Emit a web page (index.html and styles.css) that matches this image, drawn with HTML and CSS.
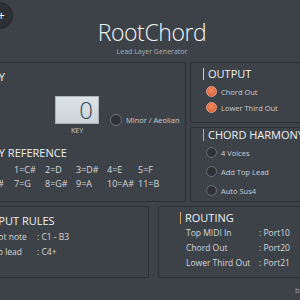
FILE: index.html
```
<!DOCTYPE html>
<html>
    <head>
        <meta charset="utf-8" />
        <title>RootChord</title>
        <link rel="stylesheet" href="styles.css">
    </head>
    <body>
        <div id="app">
            <div class="fab">+</div>
            <div class="header">
                <div class="title">RootChord</div>
                <div class="subtitle">Lead Layer Generator</div>
            </div>
            <div class="main">
                <div class="row top-row">
                    <div class="panel key-panel">
                        <div class="panel-title"><span class="bar"></span>KEY</div>
                        <div class="key-row">
                            <div class="key-col">
                                <div class="key-box">0</div>
                                <div class="key-label">KEY</div>
                            </div>
                            <div class="option">
                                <span class="radio"></span>Minor / Aeolian
                            </div>
                        </div>
                        <div class="sub-title">KEY REFERENCE</div>
                        <div class="ref-grid">
                            <span>0=C</span><span>1=C#</span><span>2=D</span><span>3=D#</span><span>4=E</span><span>5=F</span>
                            <span>6=F#</span><span>7=G</span><span>8=G#</span><span>9=A</span><span>10=A#</span><span>11=B</span>
                        </div>
                    </div>
                    <div class="right-col">
                        <div class="panel output-panel">
                            <div class="panel-title"><span class="bar blue"></span>OUTPUT</div>
                            <div class="option"><span class="radio on"></span>Chord Out</div>
                            <div class="option"><span class="radio on"></span>Lower Third Out</div>
                        </div>
                        <div class="panel harmony-panel">
                            <div class="panel-title"><span class="bar"></span>CHORD HARMONY</div>
                            <div class="option"><span class="radio"></span>4 Voices</div>
                            <div class="option"><span class="radio"></span>Add Top Lead</div>
                            <div class="option"><span class="radio"></span>Auto Sus4</div>
                        </div>
                    </div>
                </div>
                <div class="row bottom-row">
                    <div class="panel rules-panel">
                        <div class="panel-title"><span class="bar"></span>INPUT RULES</div>
                        <div class="pair"><span class="label">Root note</span><span>: C1 - B3</span></div>
                        <div class="pair"><span class="label">Top lead</span><span>: C4+</span></div>
                    </div>
                    <div class="panel routing-panel">
                        <div class="panel-title"><span class="bar"></span>ROUTING</div>
                        <div class="pair"><span class="label">Top MIDI In</span><span>: Port10</span></div>
                        <div class="pair"><span class="label">Chord Out</span><span>: Port20</span></div>
                        <div class="pair"><span class="label">Lower Third Out</span><span>: Port21</span></div>
                    </div>
                </div>
            </div>
            <div class="footer">by</div>
        </div>
    </body>
</html>
```

FILE: styles.css
```
html, body {
    margin: 0;
    height: 100%;
    overflow: hidden;
    background: #3d4248;
}
#app {
    position: relative;
    width: 300px;
    height: 300px;
    font-family: "Open Sans", "Noto Sans", sans-serif;
    color: #d9dde0;
    white-space: nowrap;
}
.fab {
    position: absolute;
    left: -13px;
    top: 3px;
    width: 25px;
    height: 25px;
    border-radius: 50%;
    background: #2c3034;
    box-shadow: 0 0 0 1px #25292c;
    color: #f0f0f0;
    font-size: 13px;
    line-height: 24px;
    text-align: right;
    box-sizing: border-box;
    padding-right: 7px;
}
.header {
    height: 62px;
    text-align: center;
    padding-left: 4px;
    box-sizing: border-box;
    padding-top: 17px;
}
.title {
    font-size: 23px;
    font-weight: 300;
    letter-spacing: -0.4px;
    color: #f2f4f5;
    line-height: 31px;
}
.subtitle {
    font-size: 7px;
    color: #a9afb4;
    line-height: 8px;
}
.main {
    margin-left: -30px;
    width: 332px;
}
.row {
    display: grid;
}
.top-row {
    grid-template-columns: 216px 1fr;
    column-gap: 4px;
    height: 140px;
}
.bottom-row {
    grid-template-columns: 179px 1fr;
    column-gap: 9px;
    height: 72px;
    margin-top: 4px;
}
.right-col {
    display: flex;
    flex-direction: column;
    gap: 4px;
}
.panel {
    border: 1px solid #2b2f33;
    border-radius: 2px;
    box-sizing: border-box;
    overflow: hidden;
}
.panel-title {
    display: flex;
    align-items: center;
    font-size: 11px;
    color: #eef0f2;
    line-height: 14px;
}
.bar {
    width: 1px;
    height: 12px;
    background: #d9a46a;
    margin-right: 4px;
}
.bar.blue {
    background: #b9d2ea;
}
.key-panel {
    padding: 7px 10px;
}
.key-row {
    display: flex;
    align-items: flex-start;
    margin-top: 12px;
    margin-left: 74px;
}
.key-col {
    display: flex;
    flex-direction: column;
    align-items: center;
}
.key-box {
    width: 44px;
    height: 28px;
    box-sizing: border-box;
    background: linear-gradient(#dde4e8, #cbd3d8);
    border: 1px solid #aab3b9;
    color: #34465a;
    font-size: 24px;
    font-weight: 300;
    line-height: 26px;
    text-align: right;
    padding-right: 5px;
}
.key-label {
    font-size: 7px;
    color: #d0d5d8;
    margin-top: 2px;
}
.key-row .option {
    margin-left: 11px;
    margin-top: 18px;
}
.option {
    display: flex;
    align-items: center;
    font-size: 7.5px;
    color: #c9ced2;
    gap: 4px;
}
.radio {
    width: 9px;
    height: 9px;
    border-radius: 50%;
    background: #2e3236;
    border: 1px solid #6b7278;
    flex: none;
}
.key-row .radio {
    width: 10px;
    height: 10px;
}
.radio.on {
    background: radial-gradient(circle at 50% 40%, #f08a5e, #d55a34);
    border-color: #e9a08a;
}
.sub-title {
    font-size: 11px;
    color: #eef0f2;
    margin-top: 11px;
    margin-left: 5px;
    line-height: 14px;
}
.ref-grid {
    display: grid;
    grid-template-columns: repeat(6, 31px);
    row-gap: 1px;
    margin-top: 3px;
    margin-left: 2px;
    font-size: 9px;
    line-height: 13px;
    color: #d3d8db;
}
.output-panel {
    height: 61px;
    padding: 4px 0 0 12px;
}
.output-panel .option {
    margin-top: 5px;
    margin-left: 3px;
}
.output-panel .option + .option {
    margin-top: 5px;
}
.harmony-panel {
    flex: 1;
    padding: 0 0 0 12px;
}
.harmony-panel .option {
    margin-top: 5px;
    margin-left: 3px;
}
.harmony-panel .option + .option {
    margin-top: 8px;
}
.rules-panel {
    padding: 7px 0 0 11px;
}
.routing-panel {
    padding: 4px 0 0 21px;
}
.pair {
    display: flex;
    font-size: 8.5px;
    line-height: 15px;
    color: #d3d8db;
    margin-left: 6px;
}
.rules-panel .pair .label {
    width: 49px;
}
.routing-panel .pair .label {
    width: 73px;
}
.rules-panel .panel-title {
    margin-bottom: 1px;
}
.footer {
    position: absolute;
    left: 295px;
    top: 284px;
    font-size: 8px;
    color: #9aa0a5;
}
```
